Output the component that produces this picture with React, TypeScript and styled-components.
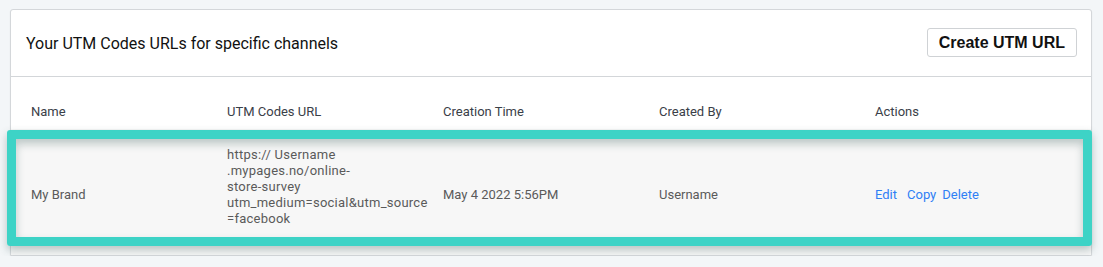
import styled, { createGlobalStyle } from 'styled-components';

const GlobalStyle = createGlobalStyle`
	body {
		margin: 0;
		background-color: #f3f6f8;
		font-family: Roboto, "Liberation Sans", sans-serif;
	}
`;

const Page = styled.div`
	padding: 9px 11px 0 10px;
`;

const Card = styled.div`
	background-color: #ffffff;
	border: 1px solid #d4d7da;
	border-radius: 3px;
	box-shadow: 0 1px 1px rgba(0, 0, 0, 0.15);
`;

const Header = styled.div`
	display: flex;
	justify-content: space-between;
	align-items: center;
	height: 66px;
	padding: 0 14px 0 15px;
	border-bottom: 1px solid #d3d6d9;
`;

const Title = styled.h2`
	margin: 0;
	font-size: 16px;
	font-weight: 400;
	color: #111111;
`;

const CreateButton = styled.button`
	height: 29px;
	padding: 0 11px;
	background-color: #ffffff;
	border: 1px solid #cfd2d5;
	border-radius: 3px;
	font-family: "Liberation Sans", Arial, sans-serif;
	font-size: 16px;
	font-weight: 700;
	color: #111111;
	margin-top: -1px;
`;

const Row = styled.div`
	display: grid;
	grid-template-columns: 196px 216px 216px 216px 1fr;
	align-items: center;
	padding-left: 20px;
	font-size: 13px;
	line-height: 16px;
`;

const HeadRow = styled(Row)`
	padding-top: 27px;
	padding-bottom: 9px;
	color: #3a4048;
`;

const BodyRow = styled(Row)`
	position: relative;
	padding-top: 18px;
	padding-bottom: 12px;
	background-color: #f7f7f7;
	color: #5a5a5a;
`;

const UrlText = styled.div`
	padding-bottom: 16px;
	letter-spacing: 0.25px;
`;

const ActionLink = styled.a<{ $gap: number }>`
	color: #2f80f5;
	text-decoration: none;
	margin-right: ${props => props.$gap}px;
	cursor: pointer;
`;

const Highlight = styled.div`
	position: absolute;
	top: 1px;
	left: -4px;
	right: -1px;
	height: 116px;
	box-sizing: border-box;
	border: 9px solid #3dd3c6;
	border-radius: 3px;
	box-shadow: 0 4px 8px rgba(40, 80, 75, 0.3), inset 0 5px 9px rgba(40, 80, 75, 0.28);
	pointer-events: none;
`;

export default function App() {
	return (
		<Page>
			<GlobalStyle />
			<Card>
				<Header>
					<Title>Your UTM Codes URLs for specific channels</Title>
					<CreateButton>Create UTM URL</CreateButton>
				</Header>
				<HeadRow>
					<div>Name</div>
					<div>UTM Codes URL</div>
					<div>Creation Time</div>
					<div>Created By</div>
					<div>Actions</div>
				</HeadRow>
				<BodyRow>
					<div>My Brand</div>
					<UrlText>
						https:// Username
						<br />
						.mypages.no/online-
						<br />
						store-survey
						<br />
						utm_medium=social&amp;utm_source
						<br />
						=facebook
					</UrlText>
					<div>May 4 2022 5:56PM</div>
					<div>Username</div>
					<div>
						<ActionLink $gap={10}>Edit</ActionLink>
						<ActionLink $gap={6}>Copy</ActionLink>
						<ActionLink $gap={0}>Delete</ActionLink>
					</div>
					<Highlight />
				</BodyRow>
			</Card>
		</Page>
	);
}
